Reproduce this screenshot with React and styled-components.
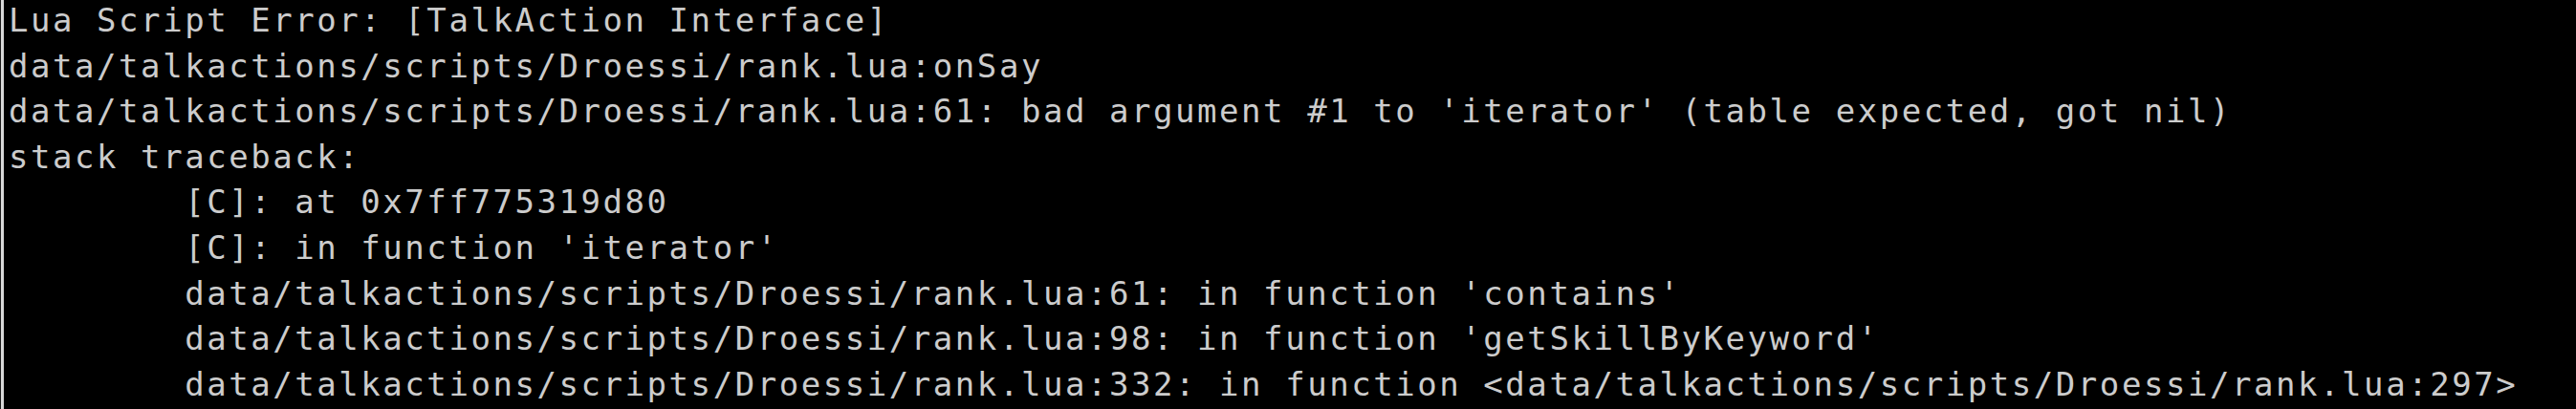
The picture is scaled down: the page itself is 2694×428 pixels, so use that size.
import React from 'react';
import styled, { createGlobalStyle } from 'styled-components';

const GlobalStyle = createGlobalStyle`
  html, body {
    margin: 0;
    padding: 0;
    background: #000;
  }
`;

const Console = styled.div`
  width: 2694px;
  height: 428px;
  box-sizing: border-box;
  background: #000;
  border-left: 1px solid #1c1c1c;
  overflow: hidden;
  display: flex;
`;

const Edge = styled.div`
  width: 3px;
  flex: none;
  background: #d9d9d9;
`;

const Output = styled.pre`
  margin: -2px 0 0;
  padding: 0 0 0 5px;
  font-family: 'DejaVu Sans Mono', 'Liberation Mono', monospace;
  font-size: 34px;
  letter-spacing: 2.55px;
  line-height: 47.6px;
  color: #cccccc;
  display: flex;
  flex-direction: column;
`;

const Line = styled.span`
  display: block;
  white-space: pre;
  padding-left: ${props => (props.indent ? 8 * 23.02 : 0)}px;
`;

const lines = [
  { text: 'Lua Script Error: [TalkAction Interface]' },
  { text: 'data/talkactions/scripts/Droessi/rank.lua:onSay' },
  { text: "data/talkactions/scripts/Droessi/rank.lua:61: bad argument #1 to 'iterator' (table expected, got nil)" },
  { text: 'stack traceback:' },
  { text: '[C]: at 0x7ff775319d80', indent: true },
  { text: "[C]: in function 'iterator'", indent: true },
  { text: "data/talkactions/scripts/Droessi/rank.lua:61: in function 'contains'", indent: true },
  { text: "data/talkactions/scripts/Droessi/rank.lua:98: in function 'getSkillByKeyword'", indent: true },
  { text: 'data/talkactions/scripts/Droessi/rank.lua:332: in function <data/talkactions/scripts/Droessi/rank.lua:297>', indent: true },
];

export default function App() {
  return (
    <>
      <GlobalStyle />
      <Console>
        <Edge />
        <Output>
          {lines.map((line, i) => (
            <Line key={i} indent={line.indent}>
              {line.text}
            </Line>
          ))}
        </Output>
      </Console>
    </>
  );
}
